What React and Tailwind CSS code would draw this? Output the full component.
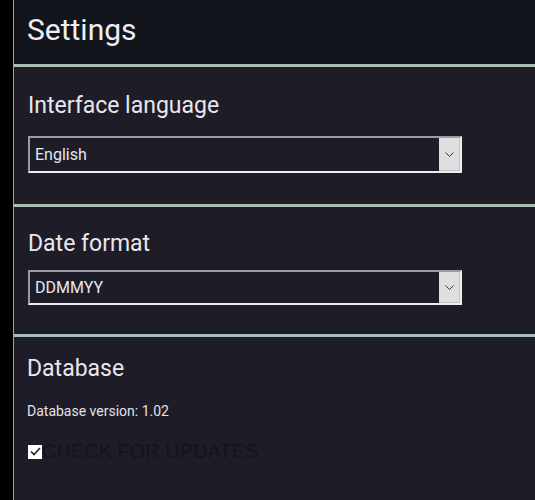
import React, { useState } from 'react';

const Chevron = () => (
    <svg width="9" height="5" viewBox="0 0 9 5" fill="none">
        <path d="M0.5 0.5 L4.5 4.5 L8.5 0.5" stroke="#3a3a3a" strokeWidth="1" />
    </svg>
);

const FakeSelect = ({ value, height }) => (
    <div
        className={`flex w-[434px] border-2 border-t-[#9d9ca3] border-l-[#9d9ca3] border-b-[#ededf2] border-r-[#ededf2] bg-[#1e1c26] ${height}`}
    >
        <div className="flex-1 flex items-center pl-[5px] text-[16px] text-[#e8e7ef]">{value}</div>
        <div className="w-[21px] flex items-center justify-center bg-[#dfdfdf] border-b border-r border-[#c4c4c4]">
            <Chevron />
        </div>
    </div>
);

const App = () => {
    const [checkUpdates, setCheckUpdates] = useState(true);

    return (
        <div className="flex w-[535px] h-[500px] overflow-hidden bg-black font-['Roboto',sans-serif]">
            {/* left gutter */}
            <div className="w-[13px] shrink-0 bg-black" />
            <div className="w-px shrink-0 bg-[#a3a3a3]" />

            <div className="flex-1 flex flex-col bg-[#1e1c26]">
                {/* header */}
                <div className="h-16 shrink-0 bg-[#12151c] pl-[13px] pt-[12px]">
                    <h1 className="text-[30px] leading-[36px] text-[#eeeef2]">Settings</h1>
                </div>
                <div className="h-[3px] shrink-0 bg-[#a8beb2]" />

                {/* interface language */}
                <section className="pl-[14px] pt-[25px] pb-[31px]">
                    <h2 className="text-[23px] leading-[28px] text-[#e8e7ef] mb-[16px]">Interface language</h2>
                    <FakeSelect value="English" height="h-[37px]" />
                </section>
                <div className="h-[3px] shrink-0 bg-[#a8beb2]" />

                {/* date format */}
                <section className="pl-[14px] pt-[23px] pb-[29px]">
                    <h2 className="text-[23px] leading-[28px] text-[#e8e7ef] mb-[12px]">Date format</h2>
                    <FakeSelect value="DDMMYY" height="h-[35px]" />
                </section>
                <div className="h-[3px] shrink-0 bg-[#a8beb2]" />

                {/* database */}
                <section className="pl-[13px] pt-[18px]">
                    <h2 className="text-[23px] leading-[28px] text-[#e8e7ef]">Database</h2>
                    <p className="mt-[18px] text-[14px] leading-[20px] text-[#e2e1e9]">Database version: 1.02</p>
                    <label className="mt-[19px] flex items-center cursor-pointer">
                        <span
                            onClick={() => setCheckUpdates(!checkUpdates)}
                            className="w-[14px] h-[14px] ml-px bg-white flex items-center justify-center"
                        >
                            {checkUpdates && (
                                <svg width="11" height="9" viewBox="0 0 11 9" fill="none">
                                    <path d="M1 4.5 L4 7.5 L10 1" stroke="#222" strokeWidth="1.6" />
                                </svg>
                            )}
                        </span>
                        <span className="font-['Liberation_Sans',Arial,sans-serif] text-[20px] leading-[23px] text-[#15141a]">
                            CHECK FOR UPDATES
                        </span>
                    </label>
                </section>
            </div>
        </div>
    );
};

export default App;
